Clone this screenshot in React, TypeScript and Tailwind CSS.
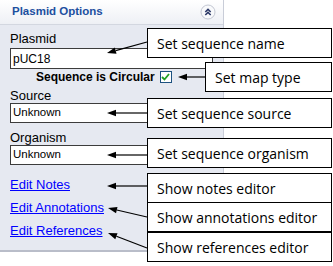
const arrows: { x1: number; y1: number; x2: number; y2: number }[] = [
  { x1: 147, y1: 42, x2: 107, y2: 53 },
  { x1: 205, y1: 77, x2: 178, y2: 77 },
  { x1: 147, y1: 113, x2: 107, y2: 113 },
  { x1: 147, y1: 155, x2: 107, y2: 155 },
  { x1: 147, y1: 186, x2: 107, y2: 186 },
  { x1: 147, y1: 217, x2: 108, y2: 208 },
  { x1: 147, y1: 248, x2: 108, y2: 233 },
];

const Arrow = ({ x1, y1, x2, y2 }: { x1: number; y1: number; x2: number; y2: number }) => {
  // arrow head at (x2, y2)
  const a = Math.atan2(y1 - y2, x1 - x2);
  const len = 9;
  const half = 3.2;
  const bx = x2 + Math.cos(a) * len;
  const by = y2 + Math.sin(a) * len;
  const px = -Math.sin(a) * half;
  const py = Math.cos(a) * half;
  return (
    <g>
      <line x1={x1} y1={y1} x2={bx} y2={by} stroke="#000" strokeWidth={1.2} />
      <polygon
        points={`${x2},${y2} ${bx + px},${by + py} ${bx - px},${by - py}`}
        fill="#000"
      />
    </g>
  );
};

const Field = ({ label, value, big }: { label: string; value: string; big?: boolean }) => (
  <>
    <div className="text-[13px] leading-[15px] text-black">{label}</div>
    <div
      className={`flex items-center border border-[#3c3c3c] bg-white pl-[2px] text-black ${
        big ? "mt-[2px] h-[21px] text-[12px]" : "h-[20px] text-[11.5px]"
      }`}
    >
      {value}
    </div>
  </>
);

const Callout = ({ top, left = 147, children }: { top: number; left?: number; children: string }) => {
  const pos: Record<number, string> = {
    28: "top-[28px]",
    62: "top-[62px]",
    98: "top-[98px]",
    138: "top-[138px]",
    173: "top-[173px]",
    202: "top-[202px]",
    232: "top-[232px]",
  };
  return (
    <div
      className={`absolute ${pos[top]} ${
        left === 147 ? "left-[147px]" : "left-[205px]"
      } right-px flex h-[30px] items-center border border-black bg-white pl-[9px] text-[14px] text-black`}
      style={{ fontFamily: '"Open Sans", sans-serif' }}
    >
      {children}
    </div>
  );
};

export default function App() {
  return (
    <div
      className="relative h-[266px] w-[333px] overflow-hidden bg-white"
      style={{ fontFamily: '"Liberation Sans", Arial, sans-serif' }}
    >
      {/* Options panel */}
      <div className="flex h-[252px] w-[224px] flex-col border-r border-b-2 border-r-[#c9cdd8] border-b-[#b9bdc9] bg-[#e6e9f1]">
        <div className="flex h-[25px] items-center justify-between border-b border-[#d3d7e0] bg-gradient-to-b from-white to-[#eef0f5] pl-3 pr-[7px]">
          <span className="text-[11.5px] font-bold text-[#1c4f9f]">Plasmid Options</span>
          <svg width="16" height="16" viewBox="0 0 16 16">
            <circle cx="8" cy="8" r="7" fill="#f8f9fb" stroke="#c3c7d2" />
            <path d="M5.3 8 L8 5.4 L10.7 8 M5.3 11 L8 8.4 L10.7 11" fill="none" stroke="#2a3766" strokeWidth="1.5" />
          </svg>
        </div>

        <div className="flex flex-col px-[10px] pt-[6px]">
          <Field label="Plasmid" value="pUC18" big />
          <div className="mt-px flex h-[14px] items-center">
            <span className="ml-[26px] text-[12px] font-bold text-black">Sequence is Circular</span>
            <span className="ml-[5px] flex h-[12px] w-[12px] items-center justify-center border border-[#1c5180] bg-white">
              <svg width="9" height="8" viewBox="0 0 9 8">
                <path d="M1 4 L3.5 6.5 L8 1" fill="none" stroke="#21a121" strokeWidth="1.8" />
              </svg>
            </span>
          </div>
          <div className="mt-[4px]">
            <Field label="Source" value="Unknown" />
          </div>
          <div className="mt-[7px]">
            <Field label="Organism" value="Unknown" />
          </div>
          <div className="mt-[12px] flex flex-col items-start gap-[8px] text-[13px] leading-[15px] text-[#0000ff]">
            <span className="underline">Edit Notes</span>
            <span className="underline">Edit Annotations</span>
            <span className="underline">Edit References</span>
          </div>
        </div>
      </div>

      {/* Pointer arrows */}
      <svg className="pointer-events-none absolute inset-0" width="333" height="266">
        {arrows.map((a, i) => (
          <Arrow key={i} {...a} />
        ))}
      </svg>

      {/* Callouts */}
      <Callout top={28}>Set sequence name</Callout>
      <Callout top={62} left={205}>Set map type</Callout>
      <Callout top={98}>Set sequence source</Callout>
      <Callout top={138}>Set sequence organism</Callout>
      <Callout top={173}>Show notes editor</Callout>
      <Callout top={202}>Show annotations editor</Callout>
      <Callout top={232}>Show references editor</Callout>
    </div>
  );
}
